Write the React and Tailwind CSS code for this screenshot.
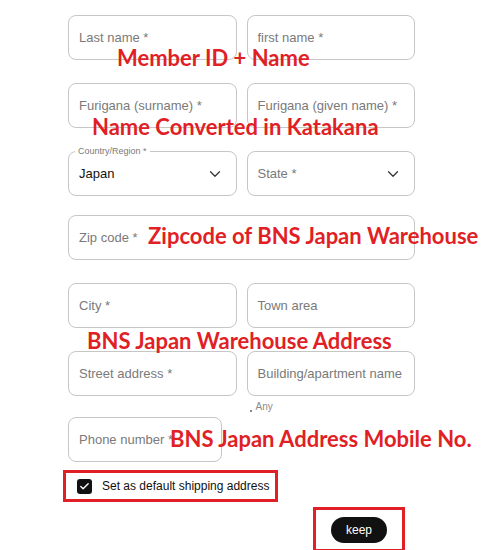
import { ChevronDown, Check } from "lucide-react";

const Field = ({ label, className = "" }) => (
  <div
    className={`h-[45px] rounded-lg border border-[#c6c6c6] bg-white flex items-center px-[10px] text-[13px] text-[#7a7a7a] ${className}`}
  >
    {label}
  </div>
);

const SelectField = ({ label, value, floating }) => (
  <div className="relative h-[45px] rounded-lg border border-[#c6c6c6] bg-white flex items-center justify-between pl-[10px] pr-[12px]">
    {floating && (
      <span className="absolute -top-[7px] left-[6px] bg-white px-[3px] text-[9px] leading-[12px] text-[#7a7a7a]">
        {floating}
      </span>
    )}
    <span className={`text-[13px] ${value ? "text-[#111]" : "text-[#7a7a7a]"}`}>
      {value || label}
    </span>
    <ChevronDown size={18} strokeWidth={1.6} className="text-[#333]" />
  </div>
);

// red annotations laid over the form
const Note = ({ children, className }) => (
  <span
    className={`absolute whitespace-nowrap text-[22px] leading-none font-bold text-[#e01f26] ${className}`}
    style={{ fontFamily: "Lato, 'Open Sans', sans-serif" }}
  >
    {children}
  </span>
);

export default function App() {
  return (
    <div
      className="relative w-[496px] h-[550px] bg-white overflow-hidden"
      style={{ fontFamily: "'Liberation Sans', Arial, sans-serif" }}
    >
      <div className="ml-[68px] w-[347px] pt-[15px] flex flex-col">
        <div className="grid grid-cols-2 gap-[10px]">
          <Field label="Last name *" />
          <Field label="first name *" />
        </div>
        <div className="grid grid-cols-2 gap-[10px] mt-[23px]">
          <Field label="Furigana (surname) *" />
          <Field label="Furigana (given name) *" />
        </div>
        <div className="grid grid-cols-2 gap-[10px] mt-[23px]">
          <SelectField value="Japan" floating="Country/Region *" />
          <SelectField label="State *" />
        </div>
        <Field label="Zip code *" className="mt-[19px]" />
        <div className="grid grid-cols-2 gap-[10px] mt-[23px]">
          <Field label="City *" />
          <Field label="Town area" />
        </div>
        <div className="grid grid-cols-2 gap-[10px] mt-[23px]">
          <Field label="Street address *" />
          <Field label="Building/apartment name" />
        </div>
        <div className="grid grid-cols-2 gap-[10px] h-[21px]">
          <div />
          <div className="flex items-center gap-[4px] pl-[3px] text-[10px] text-[#8a8a8a]">
            <span className="w-[2px] h-[2px] bg-[#888] mt-[8px]" />
            <span>Any</span>
          </div>
        </div>
        <Field label="Phone number *" className="w-[154px]" />
      </div>

      <div className="ml-[63px] mt-[8px] w-[215px] h-[32px] border-[3px] border-[#e01f26] flex items-center pl-[11px] gap-[10px]">
        <span className="w-[15px] h-[15px] rounded-[3px] bg-[#111] flex items-center justify-center">
          <Check size={11} strokeWidth={3} className="text-white" />
        </span>
        <span className="text-[12px] text-[#111]">Set as default shipping address</span>
      </div>

      <div className="ml-[313px] mt-[5px] w-[92px] h-[45px] border-[3px] border-[#e01f26] flex justify-center pt-[7px]">
        <button className="w-[56px] h-[26px] rounded-full bg-[#111] text-white text-[12px]">
          keep
        </button>
      </div>

      <Note className="left-[117px] top-[47px]">Member ID + Name</Note>
      <Note className="left-[92px] top-[116px]">Name Converted in Katakana</Note>
      <Note className="left-[148px] top-[225px]">Zipcode of BNS Japan Warehouse</Note>
      <Note className="left-[87px] top-[330px]">BNS Japan Warehouse Address</Note>
      <Note className="left-[170px] top-[428px]">BNS Japan Address Mobile No.</Note>
    </div>
  );
}
